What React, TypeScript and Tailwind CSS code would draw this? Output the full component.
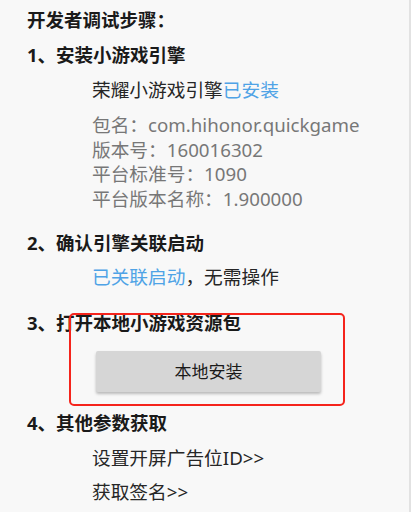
import React from "react";

const font = {
  fontFamily: '"Noto Sans", "Noto Sans CJK SC", sans-serif',
};

const App: React.FC = () => {
  return (
    <div
      className="relative w-[411px] h-[512px] overflow-hidden bg-[#f8f8f8] border-r-2 border-[#e2e2e2] pl-[27px] text-[#1a1a1a]"
      style={font}
    >
      {/* Title */}
      <div className="mt-[8px] h-[24px] leading-[24px] text-[18.5px] font-bold">开发者调试步骤：</div>

      {/* Step 1 */}
      <div className="mt-[11px] h-[24px] leading-[24px] text-[18.5px] font-bold">1、安装小游戏引擎</div>
      <div className="ml-[65px] mt-[11px] h-[24px] leading-[24px] text-[18.7px] text-[#262626]">
        荣耀小游戏引擎<span className="text-[#4fa3e6]">已安装</span>
      </div>
      <div className="ml-[65px] mt-[11px] text-[18.7px] leading-[24.5px] text-[#777777]">
        <div>包名：com.hihonor.quickgame</div>
        <div>版本号：160016302</div>
        <div>平台标准号：1090</div>
        <div>平台版本名称：1.900000</div>
      </div>

      {/* Step 2 */}
      <div className="mt-[20px] h-[24px] leading-[24px] text-[18.5px] font-bold">2、确认引擎关联启动</div>
      <div className="ml-[65px] mt-[10px] h-[24px] leading-[24px] text-[18.7px] text-[#262626]">
        <span className="text-[#4fa3e6]">已关联启动</span>，无需操作
      </div>

      {/* Step 3 */}
      <div className="mt-[22px] h-[24px] leading-[24px] text-[18.5px] font-bold">3、打开本地小游戏资源包</div>
      <button className="ml-[69px] mt-[16px] flex h-[41px] w-[225px] items-center justify-center rounded-[2px] bg-[#d6d6d6] text-[17px] text-[#1a1a1a] shadow-[0_2px_3px_rgba(0,0,0,0.25)]">
        本地安装
      </button>

      {/* Step 4 */}
      <div className="mt-[19px] h-[24px] leading-[24px] text-[18.5px] font-bold">4、其他参数获取</div>
      <div className="ml-[65px] mt-[11px] h-[24px] leading-[24px] text-[18.7px] text-[#262626]">设置开屏广告位ID&gt;&gt;</div>
      <div className="ml-[65px] mt-[10px] h-[24px] leading-[24px] text-[18.7px] text-[#262626]">获取签名&gt;&gt;</div>

      {/* Red annotation box */}
      <div className="absolute left-[69px] top-[313px] h-[93px] w-[276px] rounded-[5px] border-[2.5px] border-[#f5241c]" />
    </div>
  );
};

export default App;
